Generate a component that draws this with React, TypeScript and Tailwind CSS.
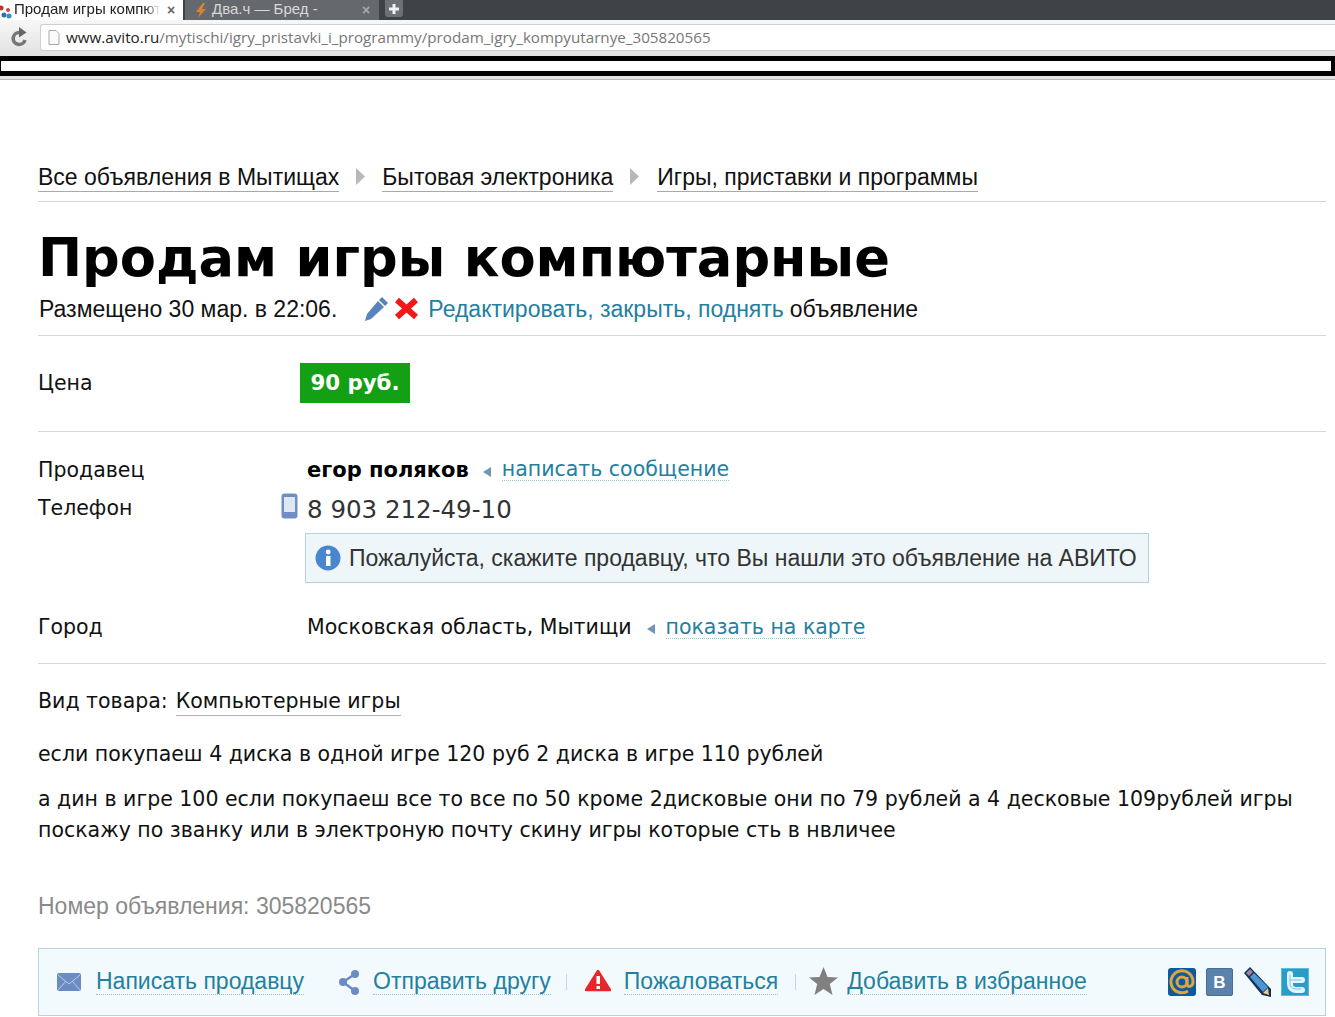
import React from 'react';

const sans = "font-['Liberation_Sans',Arial,sans-serif]";

const Dotted: React.FC<{ children: React.ReactNode; className?: string }> = ({ children, className = '' }) => (
  <a className={`text-[#23809f] border-b border-dotted border-[#9cc4d0] whitespace-nowrap ${className}`}>{children}</a>
);

const Crumb: React.FC<{ children: React.ReactNode }> = ({ children }) => (
  <a className="border-b border-[#a9a9a9] text-[#111] leading-[27px] h-[28px] whitespace-nowrap">{children}</a>
);

const CrumbArrow = ({ className = 'mx-[17px]' }: { className?: string }) => (
  <svg width="9" height="17" viewBox="0 0 9 17" className={`mt-[4px] ${className}`}>
    <path d="M0 0 L9 8.5 L0 17 Z" fill="#b8b8b8" />
  </svg>
);

const SmallArrow = ({ className = '' }: { className?: string }) => (
  <svg width="8" height="10" viewBox="0 0 8 10" className={className}>
    <path d="M8 0 L0 5 L8 10 Z" fill="#6f97b8" />
  </svg>
);

const Tabs = () => (
  <div className="h-[20px] bg-[#3f4346] flex overflow-hidden">
    <div className={`w-[183px] h-[20px] bg-white flex items-center relative ${sans} text-[15px] text-[#222]`}>
      <svg width="12" height="16" viewBox="0 0 12 16" className="shrink-0 mt-[3px]">
        <circle cx="1" cy="4" r="2.5" fill="#b3392f" />
        <circle cx="4" cy="11" r="2.5" fill="#2b6fb8" />
        <circle cx="8" cy="6" r="2" fill="#c8473a" />
        <circle cx="9" cy="12" r="2.5" fill="#3a8ecb" />
      </svg>
      <span className="ml-[2px] w-[146px] overflow-hidden whitespace-nowrap leading-[18px] mb-[2px] [mask-image:linear-gradient(to_right,black_90%,transparent)]">Продам игры компютарные</span>
      <span className="ml-[7px] text-[#666] text-[14px] font-bold leading-none">×</span>
    </div>
    <div className={`w-[194px] ml-[2px] bg-[#65696d] flex items-center ${sans} text-[15px] text-[#d8d8d8]`}>
      <svg width="12" height="17" viewBox="0 0 12 17" className="ml-[10px] shrink-0">
        <path d="M8 1 L1 10 L5 10 L3 16 L11 7 L7 7 L10 1 Z" fill="#d9852f" />
      </svg>
      <span className="ml-[5px] w-[150px] whitespace-nowrap leading-[18px] mb-[2px]">Два.ч — Бред -</span>
      <span className="text-[#a8a8a8] text-[14px] font-bold leading-none">×</span>
    </div>
    <div className="w-[18px] h-[17px] ml-[6px] bg-[#6d7175] rounded-b-[3px] flex items-center justify-center">
      <svg width="10" height="10" viewBox="0 0 10 10">
        <path d="M3.5 0 H6.5 V3.5 H10 V6.5 H6.5 V10 H3.5 V6.5 H0 V3.5 H3.5 Z" fill="#f2f2f2" />
      </svg>
    </div>
  </div>
);

const Toolbar = () => (
  <div className="h-[36px] bg-gradient-to-b from-[#f7f7f7] to-[#e2e2e2] flex items-start pt-[4px]">
    <svg width="18" height="20" viewBox="0 0 18 20" className="ml-[11px] mt-[3px] shrink-0" fill="none">
      <path d="M14 13 A6 6 0 1 1 9 5.5" stroke="#777" strokeWidth="3.6" />
      <path d="M8 0 L15.5 5.5 L8 10.5 Z" fill="#666" />
    </svg>
    <div className={`ml-[11px] flex-1 h-[27px] bg-white border border-[#cfcfcf] border-r-0 rounded-l-[3px] flex items-center font-['Open_Sans',sans-serif] text-[15.2px]`}>
      <svg width="12" height="15" viewBox="0 0 12 15" className="ml-[7px] shrink-0" fill="none">
        <path d="M1 .5 H8 L11 3.5 V14.5 H1 Z" fill="#fafafa" stroke="#aaa" />
      </svg>
      <span className="ml-[6px] text-[#222]">www.avito.ru</span>
      <span className="text-[#777]">/mytischi/igry_pristavki_i_programmy/prodam_igry_kompyutarnye_305820565</span>
    </div>
  </div>
);

const Row: React.FC<{ label: string; children?: React.ReactNode; className?: string }> = ({ label, children, className = '' }) => (
  <div className={`flex items-start ${className}`}>
    <div className="w-[269px] shrink-0">{label}</div>
    {children}
  </div>
);

const Action: React.FC<{ icon: React.ReactNode; children: React.ReactNode; className?: string }> = ({ icon, children, className = '' }) => (
  <div className={`flex items-center ${className}`}>
    {icon}
    <Dotted className="leading-[25px]">{children}</Dotted>
  </div>
);

const Divider = () => <div className="w-px h-[16px] bg-[#c9d6da]" />;

const Social = () => (
  <div className="flex items-center ml-auto mr-[16px]">
    <div className="w-[28px] h-[28px] rounded-[3px] bg-[#0d5aa0] flex items-center justify-center">
      <svg width="26" height="26" viewBox="0 0 26 26" fill="none" stroke="#dba63f" strokeWidth="3">
        <circle cx="13" cy="13" r="5" />
        <path d="M18 8 V15 C18 19 24 18 24 13 A11 11 0 1 0 19 22" />
      </svg>
    </div>
    <div className="w-[27px] h-[28px] ml-[10px] rounded-[2px] bg-[#5b82ad] border border-[#4a6d96] flex items-center justify-center text-white font-bold text-[17px] leading-none">В</div>
    <svg width="28" height="30" viewBox="0 0 28 30" className="ml-[10px]">
      <path d="M1 6 L7 0 L28 22 L28 30 L19 28 Z" fill="#123354" />
      <path d="M3 6 L7 2 L10 5 L6 9 Z" fill="#a77fa0" />
      <path d="M7 10 L11 6 L25 20 L20 25 Z" fill="#4d96d6" />
      <path d="M20 26 L25 21 L26 28 Z" fill="#ecc98e" />
    </svg>
    <div className="w-[28px] h-[28px] ml-[10px] bg-[#2a9cc8] border border-[#5fbbdc] flex items-center justify-center">
      <svg width="20" height="22" viewBox="0 0 20 22" fill="none">
        <path d="M5 3 V13 C5 17 8 19 11 19 H17 M5 9 H17" stroke="#e4f6fd" strokeWidth="6" strokeLinecap="round" />
        <path d="M5 4 V13 C5 16 8 18 11 18 H16 M5 9 H16" stroke="#7ac7e4" strokeWidth="1" strokeLinecap="round" />
      </svg>
    </div>
  </div>
);

export default function App() {
  return (
    <div className="w-[1335px] h-[1017px] overflow-hidden bg-white text-[#111]">
      <Tabs />
      <Toolbar />
      <div className="h-[20px] border-y-[5px] border-l border-r-[4px] border-black bg-white" />
      <div className="h-[3px] bg-[#e2e2e2]" />
      <div className="h-px bg-[#b8b8b8]" />

      <main className="ml-[38px] mr-[9px] font-['DejaVu_Sans',Verdana,sans-serif]">
        <nav className={`mt-[81px] h-[41px] pt-[3px] border-b border-[#d4d4d4] flex items-start ${sans} text-[23px]`}>
          <Crumb>Все объявления в Мытищах</Crumb>
          <CrumbArrow />
          <Crumb>Бытовая электроника</Crumb>
          <CrumbArrow className="ml-[17px] mr-[18px]" />
          <Crumb>Игры, приставки и программы</Crumb>
        </nav>

        <h1 className="mt-[24px] text-[52.7px] font-bold leading-[64px] text-black whitespace-nowrap">Продам игры компютарные</h1>

        <div className={`h-[46px] border-b border-[#d4d4d4] flex items-start pt-[5px] ${sans} text-[23px] leading-[28px] pl-px`}>
          <span>Размещено 30 мар. в 22:06.</span>
          <svg width="25" height="25" viewBox="0 0 25 25" className="ml-[27px] mt-[1px]">
            <path d="M18 1 L24 7 L21 10 L15 4 Z" fill="#5b82bb" />
            <path d="M14 5 L20 11 L7 23 L1 25 L3 18 Z" fill="#5b82bb" />
          </svg>
          <svg width="25" height="23" viewBox="0 0 25 23" className="ml-[5px] mt-[2px]">
            <path d="M3 3 L22 20 M22 3 L3 20" stroke="#f01818" strokeWidth="6" />
          </svg>
          <span className="ml-[9px] text-[#23809f]">Редактировать, закрыть, поднять</span>
          <span className="ml-[6px]">объявление</span>
        </div>

        <div className="h-[96px] border-b border-[#d4d4d4] pt-[27px]">
          <Row label="Цена" className="text-[20.5px] leading-[41px]">
            <div className="w-[110px] h-[40px] -ml-[7px] bg-[#14a014] text-white font-bold text-center text-[21.3px] leading-[40px]">90 руб.</div>
          </Row>
        </div>

        <div className="h-[232px] border-b border-[#d4d4d4] text-[20.5px] pt-[23px]">
          <Row label="Продавец" className="leading-[30px] h-[30px]">
            <span className="font-bold text-black text-[21px]">егор поляков</span>
            <SmallArrow className="ml-[14px] mt-[12px]" />
            <Dotted className="ml-[11px] mt-[4px] h-[22px] leading-[20px]">написать сообщение</Dotted>
          </Row>
          <Row label="Телефон" className="mt-[8px] leading-[30px] h-[32px]">
            <svg width="17" height="26" viewBox="0 0 17 26" className="-ml-[26px] mr-[9px]">
              <rect x=".5" y=".5" width="16" height="25" rx="3" fill="#6f8fc4" />
              <rect x="3" y="4" width="11" height="15" fill="#dfe7f2" />
            </svg>
            <span className="text-[24.5px] text-[#333] leading-[34px]">8 903 212-49-10</span>
          </Row>
          <div className="ml-[267px] mt-[8px] w-[844px] h-[50px] bg-[#eef6fa] border border-[#b6d2dc] flex items-center pl-[9px]">
            <svg width="26" height="26" viewBox="0 0 26 26" className="shrink-0">
              <circle cx="13" cy="13" r="12.5" fill="#4a86d0" />
              <rect x="11" y="11" width="4.5" height="10" fill="#fff" />
              <circle cx="13.2" cy="7" r="2.4" fill="#fff" />
            </svg>
            <span className={`ml-[8px] whitespace-nowrap ${sans} text-[23px] text-[#333]`}>Пожалуйста, скажите продавцу, что Вы нашли это объявление на АВИТО</span>
          </div>
          <Row label="Город" className="mt-[29px] leading-[30px] h-[30px]">
            <span>Московская область, Мытищи</span>
            <SmallArrow className="ml-[15px] mt-[12px]" />
            <Dotted className="ml-[11px] mt-[5px] h-[22px] leading-[20px]">показать на карте</Dotted>
          </Row>
        </div>

        <div className="mt-[22px] text-[20.5px] leading-[30px]">
          <div className="flex">
            <span>Вид товара:</span>
            <a className="ml-[8px] border-b border-[#b0b0b0] leading-[30px] h-[30px]">Компьютерные игры</a>
          </div>
          <p className="mt-[23px]">если покупаеш 4 диска в одной игре 120 руб 2 диска в игре 110 рублей</p>
          <p className="mt-[15px] leading-[31px]">а дин в игре 100 если покупаеш все то все по 50 кроме 2дисковые они по 79 рублей а 4 десковые 109рублей игры поскажу по званку или в электроную почту скину игры которые сть в нвличее</p>
        </div>

        <div className={`mt-[45px] ${sans} text-[23px] leading-[30px] text-[#8a8a8a]`}>Номер объявления: 305820565</div>

        <div className={`mt-[27px] h-[68px] bg-[#f3fafd] border border-[#b6d2dc] flex items-center ${sans} text-[23px] pl-[18px]`}>
          <Action icon={
            <svg width="24" height="18" viewBox="0 0 24 18" className="mr-[15px]">
              <rect width="24" height="18" rx="2" fill="#6b8cc2" />
              <path d="M1 2 L12 11 L23 2 M1 17 L9 8 M23 17 L15 8" stroke="#b9cbe6" fill="none" />
            </svg>
          }>Написать продавцу</Action>
          <Action className="ml-[34px]" icon={
            <svg width="22" height="25" viewBox="0 0 22 25" className="mr-[13px]" fill="#6b8cc2">
              <path d="M17 4 L5 12 L17 21" stroke="#6b8cc2" strokeWidth="2.5" fill="none" />
              <circle cx="17" cy="4" r="4" /><circle cx="5" cy="12" r="4" /><circle cx="17" cy="21" r="4" />
            </svg>
          }>Отправить другу</Action>
          <div className="ml-[15px]"><Divider /></div>
          <Action className="ml-[18px]" icon={
            <svg width="26" height="23" viewBox="0 0 26 23" className="mr-[13px] mb-[4px]">
              <path d="M13 2 L25 21 H1 Z" fill="#e8262a" stroke="#e8262a" strokeWidth="2.5" strokeLinejoin="round" />
              <rect x="11.5" y="7" width="3.5" height="8" fill="#fff" />
              <rect x="11.5" y="17" width="3.5" height="3" fill="#fff" />
            </svg>
          }>Пожаловаться</Action>
          <div className="ml-[17px]"><Divider /></div>
          <Action className="ml-[13px]" icon={
            <svg width="29" height="28" viewBox="0 0 29 28" className="mr-[9px] mb-[2px]">
              <path d="M14.5 0 L18.5 10 L29 10.5 L20.8 17 L23.5 28 L14.5 22 L5.5 28 L8.2 17 L0 10.5 L10.5 10 Z" fill="#808080" />
            </svg>
          }>Добавить в избранное</Action>
          <Social />
        </div>
      </main>
    </div>
  );
}
